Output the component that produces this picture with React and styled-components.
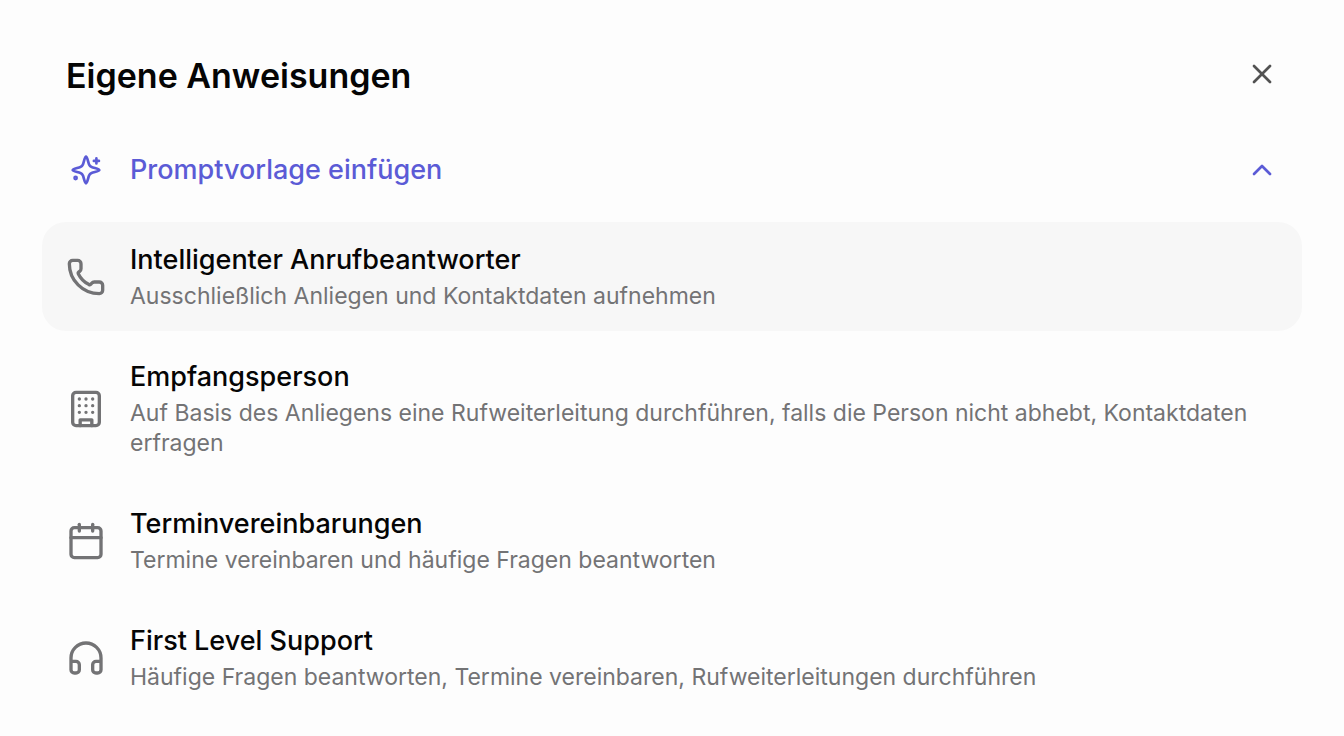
import React, { useState } from 'react'
import styled, { createGlobalStyle, css } from 'styled-components'
import { Calendar, ChevronUp, Headphones, Phone, X } from 'lucide-react'

//x//////////////////////////////////////////////////
// Icons
//x//////////////////////////////////////////////////

const SparkIcon = () => (
  <SStrokeIcon viewBox='0 0 24 24' width='32' height='32' aria-hidden='true'>
    <path d='M12 2C12.9 2 13.5 5.8 14.3 7.8C14.7 8.8 15.2 9.3 16.2 9.7C18.2 10.5 22 11.1 22 12C22 12.9 18.2 13.5 16.2 14.3C15.2 14.7 14.7 15.2 14.3 16.2C13.5 18.2 12.9 22 12 22C11.1 22 10.5 18.2 9.7 16.2C9.3 15.2 8.8 14.7 7.8 14.3C5.8 13.5 2 12.9 2 12C2 11.1 5.8 10.5 7.8 9.7C8.8 9.3 9.3 8.8 9.7 7.8C10.5 5.8 11.1 2 12 2Z' />
    <path d='M19.8 3.3v3.8M17.9 5.2h3.8' />
    <circle cx='4.2' cy='18' r='0.8' />
  </SStrokeIcon>
)

const BuildingIcon = () => (
  <SStrokeIcon viewBox='0 0 24 24' width='40' height='40' aria-hidden='true'>
    <rect x='4' y='2' width='16' height='20' rx='2' ry='2' />
    <path d='M8.5 22v-3.5h7V22' />
    <path d='M8 6h.01M12 6h.01M16 6h.01' />
    <path d='M8 10h.01M12 10h.01M16 10h.01' />
    <path d='M8 14h.01M12 14h.01M16 14h.01' />
  </SStrokeIcon>
)

const templates = [
  {
    id: 'answering',
    icon: Phone,
    title: 'Intelligenter Anrufbeantworter',
    text: 'Ausschließlich Anliegen und Kontaktdaten aufnehmen',
  },
  {
    id: 'reception',
    icon: BuildingIcon,
    title: 'Empfangsperson',
    text: 'Auf Basis des Anliegens eine Rufweiterleitung durchführen, falls die Person nicht abhebt, Kontaktdaten erfragen',
  },
  {
    id: 'appointments',
    icon: Calendar,
    title: 'Terminvereinbarungen',
    text: 'Termine vereinbaren und häufige Fragen beantworten',
  },
  {
    id: 'support',
    icon: Headphones,
    title: 'First Level Support',
    text: 'Häufige Fragen beantworten, Termine vereinbaren, Rufweiterleitungen durchführen',
  },
]

//x//////////////////////////////////////////////////
// App
//x//////////////////////////////////////////////////

export default function App() {
  const [isOpen, setOpen] = useState(true)
  const [active, setActive] = useState('answering')

  return (
    <>
      <GlobalStyle />
      <SPanel>
        <SHeader>
          <STitle>Eigene Anweisungen</STitle>
          <SCloseButton type='button' aria-label='Schließen'>
            <X size={32} strokeWidth={2} />
          </SCloseButton>
        </SHeader>

        <SToggle
          type='button'
          aria-expanded={isOpen}
          onClick={() => setOpen(!isOpen)}>
          <SIcon>
            <SparkIcon />
          </SIcon>
          <SToggleLabel>Promptvorlage einfügen</SToggleLabel>
          <SChevron $isOpen={isOpen} size={32} strokeWidth={2} />
        </SToggle>

        {isOpen && (
          <SList>
            {templates.map(({ id, icon: Icon, title, text }) => (
              <li key={id}>
                <STemplate
                  type='button'
                  $isActive={id === active}
                  onClick={() => setActive(id)}>
                  <SIcon>
                    <Icon size={40} strokeWidth={2} />
                  </SIcon>
                  <SContent>
                    <SName>{title}</SName>
                    <SText>{text}</SText>
                  </SContent>
                </STemplate>
              </li>
            ))}
          </SList>
        )}
      </SPanel>
    </>
  )
}

//x//////////////////////////////////////////////////
// Styles
//x//////////////////////////////////////////////////

const GlobalStyle = createGlobalStyle`
  * {
    box-sizing: border-box;
  }

  body {
    margin: 0;
    background: #fdfdfd;
    color: #050505;
    font-family: Inter, 'Liberation Sans', sans-serif;
  }

  button {
    border: 0;
    background: none;
    color: inherit;
    font: inherit;
    cursor: pointer;
  }

  svg {
    display: block;
  }
`

const SStrokeIcon = styled.svg`
  fill: none;
  stroke: currentColor;
  stroke-width: 2;
  stroke-linecap: round;
  stroke-linejoin: round;
`

const SPanel = styled.main`
  padding: 52px 42px 24px;
`

const SHeader = styled.header`
  display: flex;
  align-items: flex-start;
  justify-content: space-between;
  padding: 0 24px;
`

const STitle = styled.h1`
  margin: 0;
  font-size: 34px;
  font-weight: 600;
  line-height: 48px;
`

const SCloseButton = styled.button`
  padding: 6px 0;
  color: #525252;
`

const SToggle = styled.button`
  display: flex;
  align-items: center;
  gap: 24px;
  width: 100%;
  margin-top: 40px;
  padding: 12px 24px;
  color: #5b5bd6;
  text-align: left;
`

const SIcon = styled.span`
  display: flex;
  flex: none;
  justify-content: center;
  width: 40px;
`

const SToggleLabel = styled.span`
  flex: 1;
  font-size: 27px;
  font-weight: 500;
  line-height: 36px;
`

const SChevron = styled(ChevronUp)`
  transform: ${({ $isOpen }) => ($isOpen ? 'none' : 'rotate(180deg)')};
`

const SList = styled.ul`
  display: grid;
  gap: 8px;
  margin: 22px 0 0;
  padding: 0;
  list-style: none;
`

const STemplate = styled.button(
  ({ $isActive }) => css`
    display: flex;
    align-items: center;
    gap: 24px;
    width: 100%;
    padding: 20px 24px;
    border-radius: 24px;
    background: ${$isActive ? '#f7f7f7' : 'transparent'};
    text-align: left;

    ${SIcon} {
      color: #737375;
    }
  `
)

const SContent = styled.span`
  display: grid;
  flex: 1;
  gap: 3px;
`

const SName = styled.span`
  font-size: 27px;
  font-weight: 500;
  line-height: 36px;
`

const SText = styled.span`
  color: #737375;
  font-size: 23px;
  line-height: 30px;
`
